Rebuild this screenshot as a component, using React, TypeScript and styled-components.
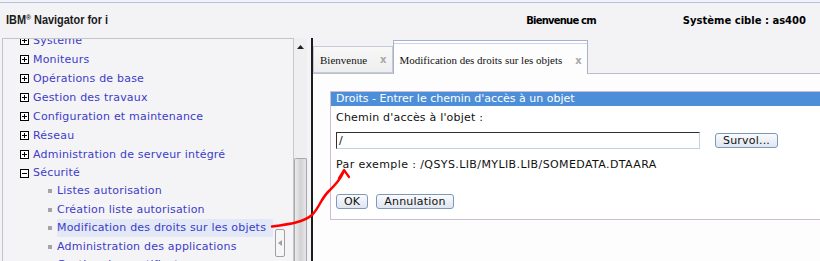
import React from 'react';
import styled, { createGlobalStyle } from 'styled-components';

const GlobalStyle = createGlobalStyle`
    html, body {
        margin: 0;
        padding: 0;
        background: #f3f3f5;
        overflow: hidden;
    }
`;

const topItems = [
    'Système',
    'Moniteurs',
    'Opérations de base',
    'Gestion des travaux',
    'Configuration et maintenance',
    'Réseau',
    'Administration de serveur intégré',
];

const securityItems = [
    'Listes autorisation',
    'Création liste autorisation',
    'Modification des droits sur les objets',
    'Administration des applications',
    'Gestion des certificats',
];

const ToggleBox = ({ open }: { open?: boolean }) => (
    <svg width="9" height="9" viewBox="0 0 9 9">
        <rect x="0.5" y="0.5" width="8" height="8" fill="#fff" stroke="#000" />
        <line x1="2" y1="4.5" x2="7" y2="4.5" stroke="#000" />
        {!open && <line x1="4.5" y1="2" x2="4.5" y2="7" stroke="#000" />}
    </svg>
);

const App = () => {
    return (
        <>
            <GlobalStyle />
            <Page>
                <Header>
                    <HeaderInner>
                        <Title>IBM<Reg>®</Reg> Navigator for i</Title>
                        <Welcome>Bienvenue cm</Welcome>
                        <Target>Système cible : as400</Target>
                    </HeaderInner>
                </Header>
                <Body>
                    <TreePanel>
                        <TreeList>
                            {topItems.map((t) => (
                                <TopRow key={t}>
                                    <ToggleBox />
                                    <Link>{t}</Link>
                                </TopRow>
                            ))}
                            <TopRow $short>
                                <ToggleBox open />
                                <Link>Sécurité</Link>
                            </TopRow>
                            {securityItems.map((t) => (
                                <ChildRow key={t}>
                                    <Bullet />
                                    <Link $selected={t === 'Modification des droits sur les objets'}>{t}</Link>
                                </ChildRow>
                            ))}
                        </TreeList>
                        <CollapseHandle>
                            <svg width="4" height="6" viewBox="0 0 4 6">
                                <polygon points="4,0 0,3 4,6" fill="#a0a0a0" />
                            </svg>
                        </CollapseHandle>
                    </TreePanel>
                    <Scrollbar>
                        <ArrowUp>
                            <svg width="7" height="4" viewBox="0 0 7 4">
                                <polygon points="0,4 3.5,0 7,4" fill="#202020" />
                            </svg>
                        </ArrowUp>
                        <Thumb />
                    </Scrollbar>
                    <ContentPane>
                        <TabBar>
                            <Tab>
                                Bienvenue<Close>x</Close>
                            </Tab>
                            <Tab $active>
                                Modification des droits sur les objets<Close>x</Close>
                            </Tab>
                        </TabBar>
                        <TabBody>
                            <Dialog>
                                <DialogTitle>Droits - Entrer le chemin d'accès à un objet</DialogTitle>
                                <DialogBody>
                                    <Label>Chemin d'accès à l'objet :</Label>
                                    <InputRow>
                                        <PathInput>/</PathInput>
                                        <Button>Survol...</Button>
                                    </InputRow>
                                    <Example>Par exemple : /QSYS.LIB/MYLIB.LIB/SOMEDATA.DTAARA</Example>
                                    <ButtonRow>
                                        <Button>OK</Button>
                                        <Button>Annulation</Button>
                                    </ButtonRow>
                                </DialogBody>
                            </Dialog>
                        </TabBody>
                    </ContentPane>
                </Body>
                <Annotation width="820" height="261" viewBox="0 0 820 261">
                    <path
                        d="M 272 226.5 C 290 224, 304 222, 312 215 C 319 208, 321 199, 328 192 C 335 185, 340 180, 344 171"
                        fill="none"
                        stroke="#ff0000"
                        strokeWidth="2.5"
                        strokeLinecap="round"
                    />
                    <path
                        d="M 339 178 L 344 170 L 349 177"
                        fill="none"
                        stroke="#ff0000"
                        strokeWidth="2.2"
                        strokeLinecap="round"
                        strokeLinejoin="round"
                    />
                </Annotation>
            </Page>
        </>
    );
};

export default App;

const Page = styled.div`
    position: relative;
    width: 820px;
    height: 261px;
    display: flex;
    flex-direction: column;
    overflow: hidden;
    background: #f3f3f5;
`;

const Header = styled.div`
    padding-top: 2px;
    height: 36px;
    box-sizing: border-box;
`;

const HeaderInner = styled.div`
    height: 34px;
    border-top: 1px solid #b8c0e4;
    display: flex;
    align-items: center;
`;

const Title = styled.div`
    margin-left: 6px;
    margin-top: -1px;
    font-family: 'Liberation Sans', Arial, sans-serif;
    font-weight: bold;
    font-size: 13px;
    color: #1a1a1a;
    white-space: nowrap;
    transform: scaleX(0.84);
    transform-origin: left center;
`;

const Reg = styled.span`
    font-size: 8px;
    vertical-align: 4px;
`;

const Welcome = styled.div`
    margin-left: auto;
    font-family: 'DejaVu Sans', Verdana, sans-serif;
    font-weight: bold;
    font-size: 10px;
    letter-spacing: -0.8px;
    color: #000;
`;

const Target = styled.div`
    margin-left: 87px;
    margin-right: 14px;
    font-family: 'DejaVu Sans', Verdana, sans-serif;
    font-weight: bold;
    font-size: 10px;
    color: #000;
`;

const Body = styled.div`
    flex: 1;
    min-height: 0;
    display: flex;
    margin-top: 2px;
`;

const TreePanel = styled.div`
    position: relative;
    width: 290px;
    margin-left: 2px;
    border-left: 1px solid #c4c4c8;
    border-top: 1px solid #c4c4c8;
    overflow: hidden;
    background: #f4f4f6;
`;

const TreeList = styled.div`
    margin-top: -8px;
    display: flex;
    flex-direction: column;
`;

const TopRow = styled.div<{ $short?: boolean }>`
    height: ${(p) => (p.$short ? '18px' : '19px')};
    flex-shrink: 0;
    display: flex;
    align-items: center;
    gap: 4px;
    padding-left: 17px;
`;

const ChildRow = styled.div`
    height: 18.5px;
    flex-shrink: 0;
    display: flex;
    align-items: center;
    gap: 5px;
    padding-left: 45px;
`;

const Bullet = styled.span`
    width: 4px;
    height: 4px;
    background: #a4a4a8;
`;

const Link = styled.span<{ $selected?: boolean }>`
    font-family: 'DejaVu Sans', Verdana, sans-serif;
    font-size: 11px;
    letter-spacing: 0.2px;
    color: #3c3cc8;
    white-space: nowrap;
    line-height: 18px;
    padding-right: ${(p) => (p.$selected ? '7px' : '0')};
    background: ${(p) => (p.$selected ? '#e2e8f6' : 'transparent')};
`;

const CollapseHandle = styled.div`
    position: absolute;
    left: 272px;
    top: 190px;
    width: 8px;
    height: 26px;
    border: 1px solid #a0a0a4;
    border-radius: 2px;
    background: #f6f6f6;
    display: flex;
    align-items: center;
    justify-content: center;
`;

const Scrollbar = styled.div`
    width: 13px;
    border-left: 1px solid #c8c8cc;
    background: #efeff1;
    display: flex;
    flex-direction: column;
    align-items: center;
`;

const ArrowUp = styled.div`
    height: 14px;
    display: flex;
    align-items: center;
    justify-content: center;
    padding-top: 2px;
`;

const Thumb = styled.div`
    margin-top: 104px;
    width: 11px;
    flex: 1;
    border: 1px solid #a8a8ac;
    border-bottom: none;
    border-radius: 2px 2px 0 0;
    background: linear-gradient(to right, #ececec, #d2d2d4 50%, #e6e6e8);
`;

const ContentPane = styled.div`
    flex: 1;
    margin-left: 4px;
    border-left: 2px solid #1c1c1c;
    display: flex;
    flex-direction: column;
    overflow: hidden;
`;

const TabBar = styled.div`
    height: 36px;
    box-sizing: border-box;
    padding-top: 2px;
    display: flex;
    align-items: flex-end;
    border-bottom: 1px solid #b8c0d0;
`;

const Tab = styled.div<{ $active?: boolean }>`
    height: ${(p) => (p.$active ? '34px' : '27px')};
    box-sizing: border-box;
    display: flex;
    align-items: center;
    padding: 0 5px 0 6px;
    padding-top: ${(p) => (p.$active ? '5px' : '0')};
    margin-bottom: ${(p) => (p.$active ? '-1px' : '0')};
    border: 1px solid ${(p) => (p.$active ? '#a8b0cc' : '#c4cad8')};
    border-bottom: ${(p) => (p.$active ? 'none' : '1px solid #c4cad8')};
    box-shadow: ${(p) => (p.$active ? 'inset 0 2px 0 #ffffff, inset 0 3px 0 #c8d4ec' : 'none')};
    background: ${(p) => (p.$active ? '#fdfdfd' : 'linear-gradient(#f8f8f8, #eeeeee)')};
    font-family: 'Liberation Serif', 'Times New Roman', serif;
    font-size: 11px;
    color: #111;
    white-space: nowrap;
`;

const Close = styled.span`
    margin-left: 13px;
    font-family: 'DejaVu Sans', sans-serif;
    font-weight: bold;
    font-size: 10px;
    color: #a8a8a8;
`;

const TabBody = styled.div`
    flex: 1;
    background: #fdfdfd;
    padding: 17px 0 0 17px;
`;

const Dialog = styled.div`
    width: 520px;
    border: 1px solid #cdbcd4;
    background: #fff;
`;

const DialogTitle = styled.div`
    height: 14px;
    line-height: 14px;
    padding-left: 5px;
    background: #4c8ed8;
    color: #fff;
    font-family: 'DejaVu Sans', Verdana, sans-serif;
    font-size: 11px;
    white-space: nowrap;
`;

const DialogBody = styled.div`
    padding: 5px 5px 10px 5px;
    font-family: 'DejaVu Sans', Verdana, sans-serif;
    font-size: 11px;
    letter-spacing: 0.2px;
    color: #111;
`;

const Label = styled.div`
    line-height: 14px;
`;

const InputRow = styled.div`
    margin-top: 7px;
    display: flex;
    align-items: center;
    gap: 15px;
`;

const PathInput = styled.div`
    width: 364px;
    height: 17px;
    box-sizing: border-box;
    padding-left: 2px;
    line-height: 15px;
    border-top: 1px solid #303030;
    border-left: 1px solid #303030;
    border-right: 1px solid #c0d4e0;
    border-bottom: 1px solid #c0d4e0;
    background: #fff;
`;

const Example = styled.div`
    margin-top: 9px;
    line-height: 14px;
    letter-spacing: 0.4px;
`;

const ButtonRow = styled.div`
    margin-top: 22px;
    display: flex;
    gap: 8px;
`;

const Button = styled.div`
    height: 15px;
    box-sizing: border-box;
    padding: 0 7px;
    line-height: 13px;
    border: 1px solid #7c98bc;
    border-radius: 3px;
    background: linear-gradient(#fafbfd, #dfe6ef);
    font-family: 'DejaVu Sans', Verdana, sans-serif;
    font-size: 11px;
    color: #111;
    white-space: nowrap;
`;

const Annotation = styled.svg`
    position: absolute;
    left: 0;
    top: 0;
    pointer-events: none;
`;
